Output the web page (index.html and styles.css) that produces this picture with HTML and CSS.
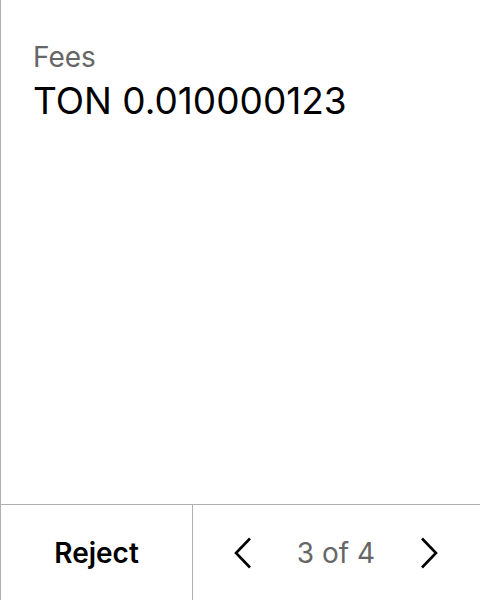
FILE: index.html
```html
<!DOCTYPE html>
<html>
<head>
<meta charset="utf-8">
<link rel="stylesheet" href="styles.css">
</head>
<body>
<div class="screen">
  <div class="content">
    <div class="label">Fees</div>
    <div class="value">TON 0.010000123</div>
  </div>
  <div class="footer">
    <div class="reject">Reject</div>
    <div class="pager">
      <svg class="chev" width="24" height="32" viewBox="0 0 24 32"><path d="M19 1.5 L5 16 L19 30.5" fill="none" stroke="#000" stroke-width="2.6"/></svg>
      <span class="count">3 of 4</span>
      <svg class="chev" width="24" height="32" viewBox="0 0 24 32"><path d="M5 1.5 L19 16 L5 30.5" fill="none" stroke="#000" stroke-width="2.6"/></svg>
    </div>
  </div>
</div>
</body>
</html>
```
FILE: styles.css
```css
html, body {
  margin: 0;
  padding: 0;
  background: #fff;
}
.screen {
  width: 480px;
  height: 600px;
  box-sizing: border-box;
  border-left: 1px solid #b0b0b0;
  display: flex;
  flex-direction: column;
  font-family: Inter, "Noto Sans", sans-serif;
}
.content {
  flex: 1;
  padding: 39px 0 0 32px;
}
.label {
  font-size: 28px;
  line-height: 36px;
  color: #666;
}
.value {
  font-size: 37px;
  line-height: 44px;
  color: #000;
  margin-top: 4px;
}
.footer {
  height: 95px;
  border-top: 1px solid #b0b0b0;
  display: flex;
}
.reject {
  width: 191px;
  border-right: 1px solid #b0b0b0;
  display: flex;
  align-items: center;
  justify-content: center;
  font-size: 28px;
  font-weight: 600;
  color: #000;
}
.pager {
  flex: 1;
  display: flex;
  align-items: center;
  justify-content: space-between;
  padding: 0 39px 0 38px;
}
.count {
  font-size: 28px;
  color: #666;
}
.chev {
  display: block;
}
```
